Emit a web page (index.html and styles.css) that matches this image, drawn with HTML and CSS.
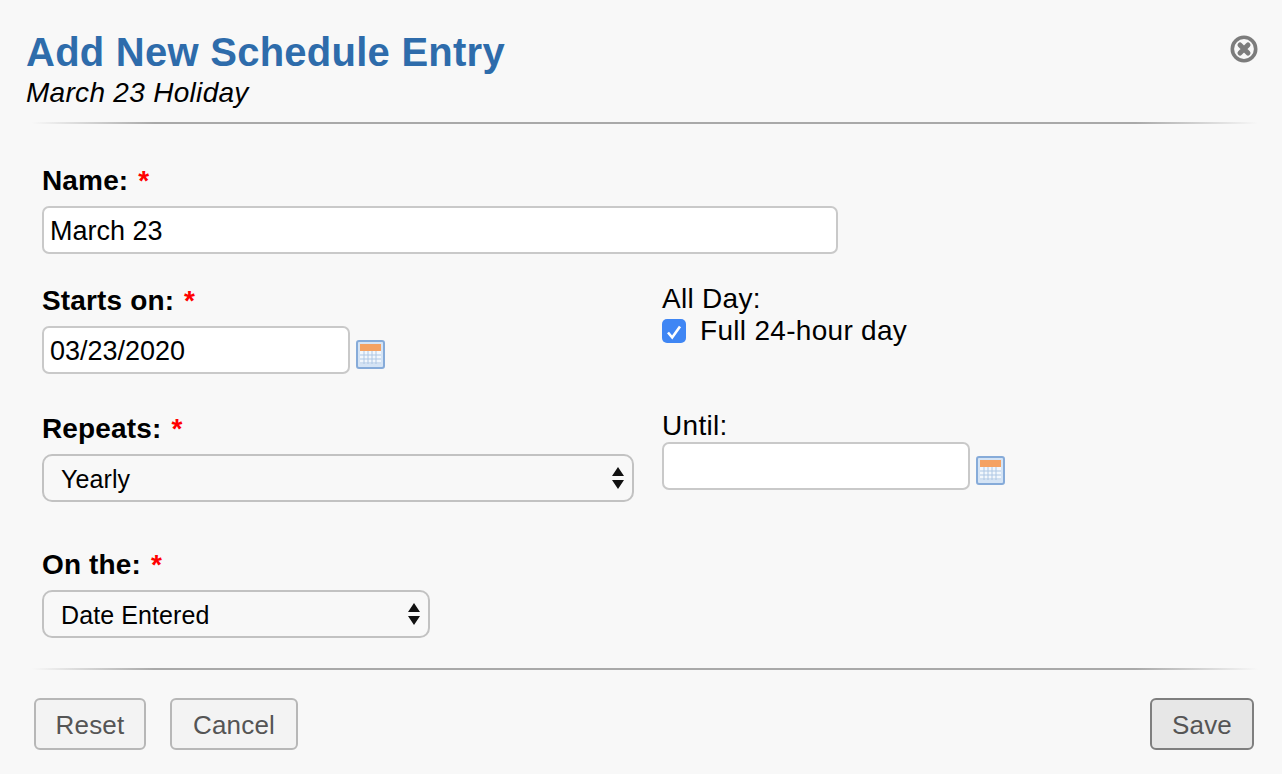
FILE: index.html
```html
<!DOCTYPE html>
<html lang="en">

<head>
    <meta charset="UTF-8">
    <meta name="viewport" content="width=device-width, initial-scale=1.0">
    <title>Add New Schedule Entry</title>
    <link rel="stylesheet" href="styles.css">
</head>

<body>
    <div class="dialog">
        <header class="dialog-head">
            <div>
                <h1 class="dialog-title">Add New Schedule Entry</h1>
                <div class="dialog-sub">March 23 Holiday</div>
            </div>
            <a class="close-btn" href="#" aria-label="Close">
                <svg viewBox="0 0 28 28" width="28" height="28">
                    <circle cx="14" cy="14" r="11.7" fill="none" stroke="#7c7c7c" stroke-width="3.6" />
                    <path d="M10 10 L18 18 M18 10 L10 18" stroke="#7c7c7c" stroke-width="5" stroke-linecap="round" />
                </svg>
            </a>
        </header>
        <div class="rule"></div>

        <form class="entry-form">
            <div class="row row-name">
                <div class="field">
                    <label class="req-label">Name: <span class="star">*</span></label>
                    <input class="text-input name-input" type="text" value="March 23">
                </div>
            </div>

            <div class="row row-start">
                <div class="field col-left">
                    <label class="req-label">Starts on: <span class="star">*</span></label>
                    <div class="date-wrap">
                        <input class="text-input date-input" type="text" value="03/23/2020">
                        <svg class="cal-icon" viewBox="0 0 30 30" width="30" height="30">
                            <rect x="2" y="2" width="27" height="27" rx="2" fill="#d5e4f5" stroke="#86abd9" stroke-width="2" />
                            <rect x="5" y="5" width="21" height="7" fill="#f5a262" />
                            <rect x="5" y="12" width="21" height="13" fill="#f2f7fc" />
                            <path d="M5 16 H26 M5 20 H26 M5 24 H26 M9 12 V25 M13 12 V25 M17 12 V25 M21 12 V25" stroke="#aec7e4" stroke-width="1" />
                        </svg>
                    </div>
                </div>
                <div class="field col-right allday">
                    <label class="plain-label">All Day:</label>
                    <label class="check-line">
                        <span class="check-box">
                            <svg viewBox="0 0 24 24" width="24" height="24">
                                <path d="M6 12.5 L10.2 17.5 L18 6.5" fill="none" stroke="#fff" stroke-width="2.6" />
                            </svg>
                        </span>
                        Full 24-hour day
                    </label>
                </div>
            </div>

            <div class="row row-repeat">
                <div class="field col-left">
                    <label class="req-label">Repeats: <span class="star">*</span></label>
                    <div class="select-box select-wide">Yearly
                        <svg class="updown" viewBox="0 0 12 26" width="12" height="26">
                            <path d="M6 2 L12 11 H0 Z M6 24 L0 15 H12 Z" fill="#111" />
                        </svg>
                    </div>
                </div>
                <div class="field col-right until">
                    <label class="plain-label">Until:</label>
                    <div class="date-wrap">
                        <input class="text-input date-input" type="text">
                        <svg class="cal-icon" viewBox="0 0 30 30" width="30" height="30">
                            <rect x="2" y="2" width="27" height="27" rx="2" fill="#d5e4f5" stroke="#86abd9" stroke-width="2" />
                            <rect x="5" y="5" width="21" height="7" fill="#f5a262" />
                            <rect x="5" y="12" width="21" height="13" fill="#f2f7fc" />
                            <path d="M5 16 H26 M5 20 H26 M5 24 H26 M9 12 V25 M13 12 V25 M17 12 V25 M21 12 V25" stroke="#aec7e4" stroke-width="1" />
                        </svg>
                    </div>
                </div>
            </div>

            <div class="row row-on">
                <div class="field">
                    <label class="req-label">On the: <span class="star">*</span></label>
                    <div class="select-box select-narrow">Date Entered
                        <svg class="updown" viewBox="0 0 12 26" width="12" height="26">
                            <path d="M6 2 L12 11 H0 Z M6 24 L0 15 H12 Z" fill="#111" />
                        </svg>
                    </div>
                </div>
            </div>
        </form>

        <div class="rule"></div>

        <footer class="dialog-foot">
            <button class="btn" type="button">Reset</button>
            <button class="btn btn-cancel" type="button">Cancel</button>
            <button class="btn btn-save" type="button">Save</button>
        </footer>
    </div>
</body>

</html>
```

FILE: styles.css
```css
html,
body {
    margin: 0;
    height: 100%;
}

body {
    background: #f8f8f8;
    color: #000;
    font-family: "Liberation Sans", Arial, sans-serif;
    font-size: 28px;
    overflow: hidden;
}

.dialog {
    padding: 28px 24px 0 32px;
}

.dialog-head {
    display: flex;
    justify-content: space-between;
    margin-left: -6px;
}

.dialog-title {
    margin: 0;
    color: #2e6cab;
    font-size: 40px;
    letter-spacing: 0.25px;
    line-height: 48px;
    font-weight: bold;
}

.dialog-sub {
    padding-top: 1px;
    font-size: 28px;
    letter-spacing: 0.3px;
    font-style: italic;
    line-height: 32px;
}

.close-btn {
    display: block;
    height: 28px;
    margin-top: 7px;
}

.rule {
    height: 2px;
    margin-top: 13px;
    background: linear-gradient(to right, #f8f8f8, #a9a9a9 10%, #a9a9a9 90%, #f8f8f8);
}

.entry-form {
    padding: 41px 0 17px 10px;
}

.row {
    display: flex;
}

.col-left {
    width: 592px;
    margin-right: 28px;
}

.req-label {
    display: block;
    font-weight: bold;
    letter-spacing: 0.15px;
    line-height: 32px;
    margin-bottom: 9px;
}

.star {
    margin-left: 2px;
    color: #f00;
}

.plain-label {
    display: block;
    letter-spacing: 0.3px;
    line-height: 32px;
}

.text-input {
    box-sizing: border-box;
    height: 48px;
    padding: 2px 6px 0;
    border: 2px solid #c9c9c9;
    border-radius: 7px;
    background: #fff;
    color: #000;
    font: 27px "Liberation Sans", Arial, sans-serif;
}

.name-input {
    width: 796px;
    display: block;
}

.date-input {
    width: 308px;
}

.date-wrap {
    display: flex;
    align-items: flex-end;
    gap: 5px;
}

.cal-icon {
    margin-bottom: 5px;
}

.row-start {
    margin-top: 31px;
}

.allday {
    margin-top: -2px;
}

.check-line {
    display: flex;
    align-items: center;
    gap: 14px;
    letter-spacing: 0.3px;
    line-height: 32px;
}

.check-box {
    display: block;
    width: 24px;
    height: 24px;
    margin-top: -1px;
    border-radius: 5px;
    background: #3f86f4;
}

.row-repeat {
    margin-top: 39px;
}

.until {
    margin-top: -3px;
}

.select-box {
    box-sizing: border-box;
    display: flex;
    align-items: center;
    justify-content: space-between;
    height: 48px;
    padding: 2px 8px 0 17px;
    border: 2px solid #c2c2c2;
    border-radius: 10px;
    background: #f8f8f8;
    font-size: 25px;
    letter-spacing: 0.1px;
}

.select-wide {
    width: 592px;
}

.select-narrow {
    width: 388px;
}

.updown {
    margin-top: -2px;
}

.row-on {
    margin-top: 47px;
}

.dialog-foot {
    display: flex;
    gap: 24px;
    margin: 28px 4px 0 2px;
}

.btn {
    box-sizing: border-box;
    height: 52px;
    width: 112px;
    padding: 2px 0 0;
    border: 2px solid #b7b7b7;
    border-radius: 6px;
    background: #f3f3f3;
    color: #555;
    font: 26px "Liberation Sans", Arial, sans-serif;
    letter-spacing: 0.2px;
}

.btn-cancel {
    width: 128px;
}

.btn-save {
    width: 104px;
    margin-left: auto;
    border-color: #7f7f7f;
    background: #e7e7e7;
}
```
